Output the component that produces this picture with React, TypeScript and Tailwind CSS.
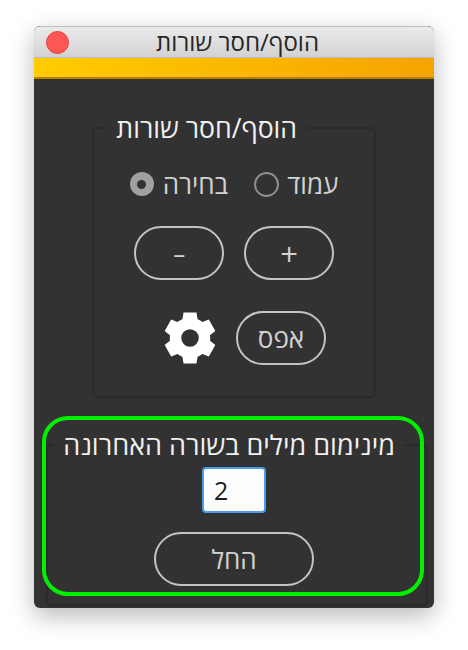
import React from "react";

function Pill({ w, label, cls = "", labelCls = "" }: { w: string; label: string; cls?: string; labelCls?: string }) {
  return (
    <div className={`${w} h-[54px] rounded-[27px] border-2 border-[#c4c4c4] flex items-center justify-center text-[26px] leading-none text-[#d2d2d2] ${cls}`}>
      <span className={`inline-block ${labelCls}`}>{label}</span>
    </div>
  );
}

function Gear() {
  const teeth = [0, 60, 120, 180, 240, 300];
  return (
    <svg width="52" height="52" viewBox="0 0 52 52" className="block">
      <g fill="#ffffff">
        {teeth.map((a) => (
          <path key={a} d="M19.5 0.5 H32.5 L34 10 H18 Z" transform={`rotate(${a} 26 26)`} />
        ))}
      </g>
      <circle cx="26" cy="26" r="14.5" fill="none" stroke="#ffffff" strokeWidth="11.5" />
    </svg>
  );
}

export default function App() {
  return (
    <div className="w-[468px] h-[650px] bg-white pt-[26px] pl-[34px] font-['Open_Sans','Liberation_Sans',sans-serif]">
      <div dir="rtl" className="relative w-[400px] h-[582px] rounded-[6px] bg-[#323232] shadow-[0_8px_24px_rgba(0,0,0,0.28)] flex flex-col overflow-hidden">
        <div className="relative h-[32px] shrink-0 pl-[7px] border-t border-[#bdbdbd] border-b border-b-[#bcbcbc] bg-gradient-to-b from-[#ebebeb] to-[#d2d2d2] flex items-center justify-center text-[24px] leading-none text-[#262626]">
          הוסף/חסר שורות
          <span className="absolute left-[12px] top-[4px] w-[23px] h-[23px] rounded-full bg-[#fc5753] border border-[#e0443e]" />
        </div>
        <div className="h-[21px] shrink-0 bg-gradient-to-r from-[#ffcc00] to-[#f5a300] border-b-2 border-[#b87f00]" />

        <div className="flex-1 flex flex-col items-center">
          <fieldset className="mt-[32px] w-[284px] h-[287px] border-2 border-[#2a2a2a] rounded-[5px] flex flex-col items-center">
            <legend className="mr-[67px] px-[10px] text-[26.6px] leading-[34px] text-[#f0f0f0] font-medium">הוסף/חסר שורות</legend>
            <div className="mt-[26px] h-[26px] flex items-center gap-[26px] text-[26px] leading-none text-[#d2d2d2]">
              <div className="flex items-center gap-[8px]">
                <span>עמוד</span>
                <span className="w-[25px] h-[25px] rounded-full border-2 border-[#8f8f8f]" />
              </div>
              <div className="flex items-center gap-[9px]">
                <span>בחירה</span>
                <span className="w-[24px] h-[24px] rounded-full bg-[#a0a0a0] flex items-center justify-center">
                  <span className="w-[9px] h-[9px] rounded-full bg-[#323232]" />
                </span>
              </div>
            </div>
            <div className="mt-[29px] flex gap-[20px]">
              <Pill w="w-[90px]" label="+" cls="pt-[3px]" labelCls="text-[31px] font-medium" />
              <Pill w="w-[90px]" label="-" labelCls="scale-x-[1.6] font-medium" />
            </div>
            <div className="mt-[31px] ml-[22px] flex items-center gap-[20px]">
              <Pill w="w-[90px]" label="אפס" />
              <Gear />
            </div>
          </fieldset>

          <fieldset className="mt-[30px] ml-[6px] w-[382px] h-[178px] border-2 border-[#2a2a2a] rounded-[5px] flex flex-col items-center">
            <legend className="mr-[22px] px-[9px] text-[27px] leading-[34px] text-[#f0f0f0]">מינימום מילים בשורה האחרונה</legend>
            <div dir="ltr" className="mt-[5px] mr-[6px] w-[64px] h-[46px] bg-[#fdfdfd] border-2 border-[#4a9be8] rounded-[4px] pl-[10px] flex items-center text-[25px] leading-none text-[#1c1c1c]">2</div>
            <Pill w="w-[160px]" label="החל" cls="mt-[19px] mr-[6px]" />
          </fieldset>
        </div>

        <div className="absolute left-[8px] top-[390px] w-[382px] h-[180px] rounded-[26px] border-4 border-[#00f000]" />
      </div>
    </div>
  );
}
